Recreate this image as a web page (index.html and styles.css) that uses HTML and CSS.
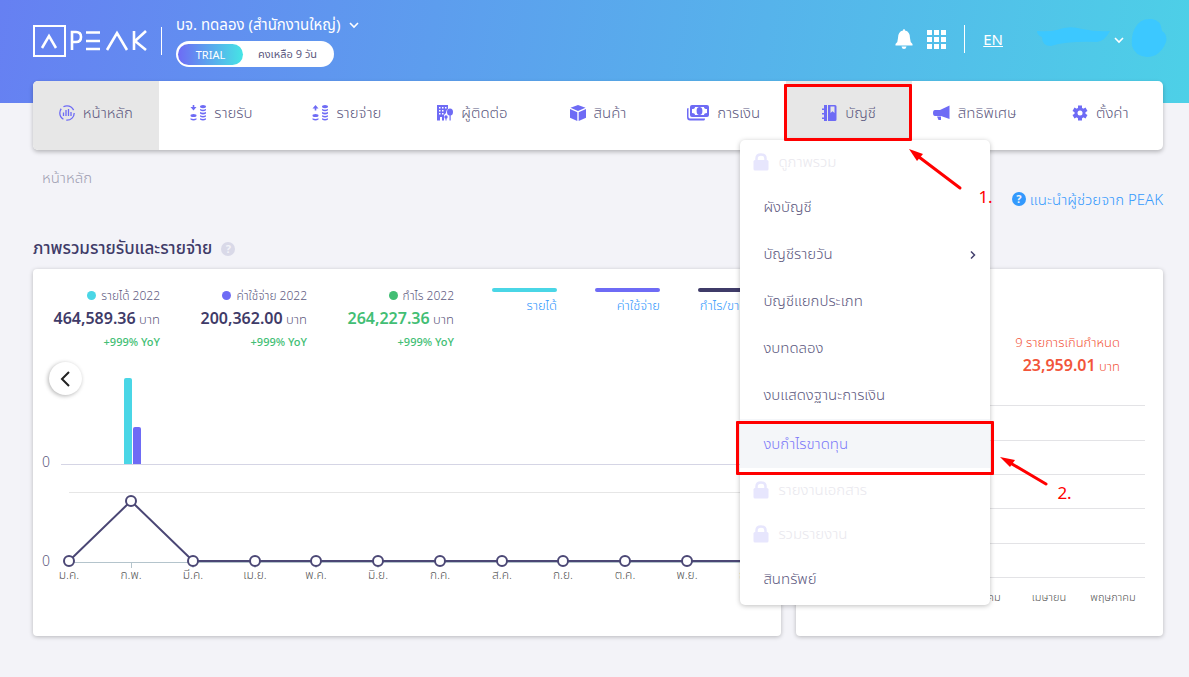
FILE: index.html
```
<!DOCTYPE html>
<html lang="th">
<head>
    <meta charset="UTF-8">
    <meta name="viewport" content="width=device-width, initial-scale=1.0">
    <title>PEAK - หน้าหลัก</title>
    <link rel="stylesheet" href="styles.css">
</head>
<body>

<header class="topbar">
    <svg class="logo" width="116" height="34" viewBox="0 0 116 34" role="img" aria-label="PEAK">
        <g fill="none" stroke="#fff" stroke-width="2">
            <rect x="1" y="2" width="31" height="30"/>
            <path d="M9 24 L16 12 L23 24" stroke-width="2.500"/>
            <path d="M39 26 V8 H43 Q48 8 48 13 Q48 18 43 18 H39 M53 8.500 H67 M53 17 H67 M53 25 H67 M74 26 L84 9 L94 26 M101 7 V26 M113 7 L102 17 L113 26" stroke-width="2.600"/>
        </g>
    </svg>
    <div class="divider"></div>
    <div class="company">
        <button type="button" class="company-name">บจ. ทดลอง (สำนักงานใหญ่)
            <svg width="10" height="7" viewBox="0 0 10 7"><path d="M1 1 L5 5 L9 1" fill="none" stroke="#fff" stroke-width="1.600"/></svg>
        </button>
        <div class="plan"><span class="plan-type">TRIAL</span><span class="plan-left">คงเหลือ 9 วัน</span></div>
    </div>
    <div class="tools">
        <button type="button" aria-label="การแจ้งเตือน">
            <svg width="18" height="20" viewBox="0 0 18 20" fill="#fff"><path d="M9 0 Q10 0 10 1.5 Q15 2.500 15 9 Q15 13 17.500 15 V16.500 H0.500 V15 Q3 13 3 9 Q3 2.500 8 1.500 Q8 0 9 0 Z M6.500 17.500 H11.500 Q11 20 9 20 Q7 20 6.500 17.500 Z"/></svg>
        </button>
        <button type="button" aria-label="แอป">
            <svg width="19" height="19" viewBox="0 0 19 19" fill="#fff"><path d="M0 0h5v5H0z M7 0h5v5H7z M14 0h5v5h-5z M0 7h5v5H0z M7 7h5v5H7z M14 7h5v5h-5z M0 14h5v5H0z M7 14h5v5H7z M14 14h5v5h-5z"/></svg>
        </button>
        <div class="divider"></div>
        <a href="#" class="lang">EN</a>
        <button type="button" class="user" aria-label="บัญชีผู้ใช้">
            <svg width="130" height="42" viewBox="0 0 130 42">
                <path d="M0 13 Q12 14 20 12 Q32 7 45 11 Q60 14 73 13 Q68 23 60 24 Q30 23 14 28 Q5 28 5 19 Q0 17 0 13 Z M98 10 Q103 0 115 1 Q124 2 125 13 Q131 17 129 24 Q123 39 110 39 Q98 38 95 28 Q94 17 98 10 Z" fill="#3cc8ff"/>
                <path d="M78 20 L82 24 L86 20" fill="none" stroke="#fff" stroke-width="1.600"/>
            </svg>
        </button>
    </div>
</header>

<nav class="mainnav">
    <div class="nav-item active"><a href="#">
        <svg width="16" height="16" viewBox="0 0 16 16" fill="none" stroke="#6e6bf5" stroke-width="1.300"><circle cx="8" cy="8" r="7.200" stroke-dasharray="12 3"/><path d="M4.500 7.500V11 M7 5V11 M9.500 4V11 M12 7V11"/></svg>
        หน้าหลัก</a></div>
    <div class="nav-item"><a href="#">
        <svg width="16" height="16" viewBox="0 0 16 16" fill="#6e6bf5"><path d="M2.700 0h1.600v2H6.500L3.500 5.500 0.500 2h2.200z"/><ellipse cx="3.500" cy="10.500" rx="3" ry="1.500"/><path d="M0.500 13.200q3 1.500 6 0v1.300q-3 2-6 0z"/><ellipse cx="13" cy="1.600" rx="3" ry="1.600"/><path d="M10 4q3 1.500 6 0v1.300q-3 2-6 0z M10 7.100q3 1.500 6 0v1.300q-3 2-6 0z M10 10.200q3 1.500 6 0v1.300q-3 2-6 0z M10 13.200q3 1.500 6 0v1.300q-3 2-6 0z"/></svg>
        รายรับ</a></div>
    <div class="nav-item"><a href="#">
        <svg width="16" height="16" viewBox="0 0 16 16" fill="#6e6bf5"><path d="M2.700 5.500h1.600v-2H6.500L3.500 0 0.500 3.500h2.200z"/><ellipse cx="3.500" cy="10.500" rx="3" ry="1.500"/><path d="M0.500 13.200q3 1.500 6 0v1.300q-3 2-6 0z"/><ellipse cx="13" cy="1.600" rx="3" ry="1.600"/><path d="M10 4q3 1.500 6 0v1.300q-3 2-6 0z M10 7.100q3 1.500 6 0v1.300q-3 2-6 0z M10 10.200q3 1.500 6 0v1.300q-3 2-6 0z M10 13.200q3 1.500 6 0v1.300q-3 2-6 0z"/></svg>
        รายจ่าย</a></div>
    <div class="nav-item"><a href="#">
        <svg width="16" height="16" viewBox="0 0 16 16" fill="#6e6bf5"><path d="M0 0h11v4q-2 1-2 4l-2 2v5.500H5V12H3v3.500H0z"/><path d="M2 2h1.500v1.500H2z M5 2h1.500v1.500H5z M8 2h1.500v1.500H8z M2 5h1.500v1.500H2z M5 5h1.500v1.500H5z M2 8h1.500v1.500H2z M5 8h1.500v1.500H5z" fill="#fff"/><ellipse cx="13" cy="7" rx="3" ry="3.500"/><path d="M12.500 9h1.200v6.500h-1.200z M8.500 12h1v3.500h-1z"/><circle cx="9" cy="12" r="1.700"/></svg>
        ผู้ติดต่อ</a></div>
    <div class="nav-item"><a href="#">
        <svg width="16" height="16" viewBox="0 0 16 16" fill="#6e6bf5"><path d="M8 0 L15.500 2.700 L8 6 L0.500 2.700 Z M0 4 L7.300 7.200 V16 L0 12.700 Z M16 4 L8.700 7.200 V16 L16 12.700 Z"/></svg>
        สินค้า</a></div>
    <div class="nav-item"><a href="#">
        <svg width="22" height="16" viewBox="0 0 22 16" fill="#6e6bf5"><path d="M5 0H20Q22 0 22 2V10Q22 12 20 12H5Q3 12 3 10V2Q3 0 5 0Z M0 4Q0 3 1.500 3V12Q1.500 13.500 3.500 13.500H18Q18 15.500 17 15.500H3Q0 15.500 0 12Z"/><path d="M8 2H17Q17 4 20 4V8Q17 8 17 10H8Q8 8 5 8V4Q8 4 8 2Z" fill="#fff"/><ellipse cx="12.500" cy="6" rx="2.900" ry="4"/></svg>
        การเงิน</a></div>
    <div class="nav-item active"><a href="#">
        <svg width="15" height="16" viewBox="0 0 15 16" fill="#6e6bf5"><path d="M2 0h3v16H2v-2H0v-1.500h2V9.500H0V8h2V5H0V3.500h2z M6 0h7q1.500 0 1.500 1.500v13q0 1.500-1.500 1.500H6z"/><path d="M8.500 1.500h4V8l-2-1.700-2 1.700z" fill="#e7e7e7"/></svg>
        บัญชี</a>
        <span class="mark mark-nav"></span>
        <ul class="submenu">
            <li class="locked"><svg width="16" height="18" viewBox="0 0 16 18"><path d="M3.500 8V5.500Q3.500 1.500 8 1.500Q12.500 1.500 12.500 5.500V8" fill="none" stroke="#e7e6fd" stroke-width="2.500"/><rect x="0.500" y="7" width="15" height="10.500" rx="1.500" fill="#e7e6fd"/></svg>ดูภาพรวม</li>
            <li><a href="#">ผังบัญชี</a></li>
            <li><a href="#">บัญชีรายวัน <svg width="6" height="8" viewBox="0 0 6 8"><path d="M1 0.500 L4.500 4 L1 7.500" fill="none" stroke="#44406e" stroke-width="1.500"/></svg></a></li>
            <li><a href="#">บัญชีแยกประเภท</a></li>
            <li><a href="#">งบทดลอง</a></li>
            <li><a href="#">งบแสดงฐานะการเงิน</a></li>
            <li class="selected"><a href="#">งบกำไรขาดทุน</a><span class="mark mark-menu"></span>
                <svg class="arrow arrow-menu" width="50" height="34" viewBox="0 0 50 34"><path d="M12 8 L46 28" stroke="#f00" stroke-width="3" stroke-linecap="round"/><path d="M0 1 L15 4 L10 11 Z" fill="#f00"/></svg>
                <span class="step step-two">2.</span></li>
            <li class="locked"><svg width="16" height="18" viewBox="0 0 16 18"><path d="M3.500 8V5.500Q3.500 1.500 8 1.500Q12.500 1.500 12.500 5.500V8" fill="none" stroke="#e7e6fd" stroke-width="2.500"/><rect x="0.500" y="7" width="15" height="10.500" rx="1.500" fill="#e7e6fd"/></svg>รายงานเอกสาร</li>
            <li class="locked"><svg width="16" height="18" viewBox="0 0 16 18"><path d="M3.500 8V5.500Q3.500 1.500 8 1.500Q12.500 1.500 12.500 5.500V8" fill="none" stroke="#e7e6fd" stroke-width="2.500"/><rect x="0.500" y="7" width="15" height="10.500" rx="1.500" fill="#e7e6fd"/></svg>รวมรายงาน</li>
            <li><a href="#">สินทรัพย์</a></li>
        </ul>
        <svg class="arrow arrow-nav" width="54" height="42" viewBox="0 0 54 42"><path d="M10 8 L51 39" stroke="#f00" stroke-width="3" stroke-linecap="round"/><path d="M0 0 L14 5 L8 12 Z" fill="#f00"/></svg>
        <span class="step step-one">1.</span>
    </div>
    <div class="nav-item"><a href="#">
        <svg width="17" height="16" viewBox="0 0 17 16" fill="#6e6bf5"><path d="M16.500 0.500V14L8 11H2Q0 11 0 8Q0 5 2 5H7Z M4 11.500H8V15H5.500Z"/></svg>
        สิทธิพิเศษ</a></div>
    <div class="nav-item"><a href="#">
        <svg width="16" height="16" viewBox="0 0 16 16"><g stroke="#6e6bf5" stroke-width="4"><path d="M8 0.500V15.500 M1.500 4.250L14.500 11.750 M1.500 11.750L14.500 4.250"/></g><circle cx="8" cy="8" r="5.500" fill="#6e6bf5"/><circle cx="8" cy="8" r="2.500" fill="#fff"/></svg>
        ตั้งค่า</a></div>
</nav>

<main>
    <div class="crumbs">
        <span class="crumb">หน้าหลัก</span>
        <a href="#" class="helper"><span class="help blue">?</span>แนะนำผู้ช่วยจาก PEAK</a>
    </div>
    <h1>ภาพรวมรายรับและรายจ่าย <span class="help">?</span></h1>

    <div class="cards">
        <section class="card overview">
            <div class="summary">
                <div class="stat">
                    <p class="stat-name"><i class="dot cyan"></i>รายได้ 2022</p>
                    <p class="stat-value"><b>464,589.36</b> บาท</p>
                    <p class="yoy">+999% YoY</p>
                </div>
                <div class="stat">
                    <p class="stat-name"><i class="dot violet"></i>ค่าใช้จ่าย 2022</p>
                    <p class="stat-value"><b>200,362.00</b> บาท</p>
                    <p class="yoy">+999% YoY</p>
                </div>
                <div class="stat profit">
                    <p class="stat-name"><i class="dot green"></i>กำไร 2022</p>
                    <p class="stat-value"><b>264,227.36</b> บาท</p>
                    <p class="yoy">+999% YoY</p>
                </div>
                <div class="legends">
                    <a href="#" class="legend"><i class="bar cyan"></i>รายได้</a>
                    <a href="#" class="legend"><i class="bar violet"></i>ค่าใช้จ่าย</a>
                    <a href="#" class="legend"><i class="bar navy"></i>กำไร/ขาดทุน</a>
                </div>
            </div>
            <button type="button" class="prev" aria-label="ก่อนหน้า">
                <svg width="10" height="16" viewBox="0 0 10 16"><path d="M9 1 L2 8 L9 15" fill="none" stroke="#222" stroke-width="2"/></svg>
            </button>
            <!-- viewBox is in card pixels, points are 62 apart -->
            <svg class="chart" viewBox="0 0 748 240">
                <path d="M28 104.500H748" stroke="#d5d5e5"/>
                <path d="M36 132.500H748" stroke="#e6e6e6"/>
                <path d="M36 202.500H748 M98.500 202V208 M160 202V208 M222 202V208 M283 202V208 M345 202V208" stroke="#b4c4cc"/>
                <path d="M91 104V20q0-2 2-2h4q2 0 2 2V104z" fill="#4ad6e6"/>
                <path d="M100 104V69q0-2 2-2h4q2 0 2 2V104z" fill="#6e6bf5"/>
                <g fill="#fff" stroke="#4b4775" stroke-width="2">
                    <path d="M36 201 L98 141 L160 201 H748" fill="none"/>
                    <circle cx="36" cy="201" r="5"/><circle cx="98" cy="141" r="5"/><circle cx="160" cy="201" r="5"/><circle cx="222" cy="201" r="5"/><circle cx="283" cy="201" r="5"/><circle cx="345" cy="201" r="5"/><circle cx="407" cy="201" r="5"/><circle cx="469" cy="201" r="5"/><circle cx="530" cy="201" r="5"/><circle cx="592" cy="201" r="5"/><circle cx="654" cy="201" r="5"/><circle cx="716" cy="201" r="5"/>
                </g>
                <g class="zero"><text x="13" y="107">0</text><text x="13" y="206">0</text></g>
                <g class="months">
                    <text x="36" y="219">ม.ค.</text><text x="98" y="219">ก.พ.</text><text x="160" y="219">มี.ค.</text><text x="222" y="219">เม.ย.</text><text x="283" y="219">พ.ค.</text><text x="345" y="219">มิ.ย.</text><text x="407" y="219">ก.ค.</text><text x="469" y="219">ส.ค.</text><text x="530" y="219">ก.ย.</text><text x="592" y="219">ต.ค.</text><text x="654" y="219">พ.ย.</text><text x="716" y="219">ธ.ค.</text>
                </g>
            </svg>
        </section>

        <section class="card overdue">
            <p class="late">9 รายการเกินกำหนด</p>
            <p class="late-value"><b>23,959.01</b> บาท</p>
            <svg class="chart" viewBox="0 0 367 232">
                <path d="M30 9.500H349 M30 44.500H349 M30 78.500H349 M30 112.500H349 M30 147.500H349 M30 181.500H349" stroke="#e3e3e6"/>
                <g class="months small">
                    <text x="63" y="205">มกราคม</text><text x="126" y="205">กุมภาพันธ์</text><text x="189" y="205">มีนาคม</text><text x="253" y="205">เมษายน</text><text x="317" y="205">พฤษภาคม</text>
                </g>
            </svg>
        </section>
    </div>
</main>

</body>
</html>
```
FILE: styles.css
```
* {
    box-sizing: border-box;
}
body {
    margin: 0;
    font-family: 'Noto Sans', 'Noto Sans Thai', 'Noto Sans Thai UI', sans-serif;
    font-size: 15px;
    font-weight: 300;
    color: #5d5980;
    background: #f3f3f8;
}
a {
    color: inherit;
    text-decoration: none;
}
p, ul {
    margin: 0;
    padding: 0;
}
button {
    padding: 0;
    border: none;
    background: none;
    font: inherit;
    color: inherit;
    cursor: pointer;
}
.topbar {
    display: flex;
    align-items: flex-start;
    height: 103px;
    padding: 15px 22px 0 33px;
    background: linear-gradient(100deg, #6680f2, #4dd0e7);
    color: #fff;
}
.logo {
    margin-top: 9px;
}
.divider {
    width: 1px;
    height: 28px;
    background: #fff;
    margin: 12px 14px 0 12px;
}
.company-name {
    display: flex;
    align-items: center;
    gap: 9px;
    height: 20px;
    font-weight: 400;
}
.plan {
    display: flex;
    align-items: center;
    width: 158px;
    height: 26px;
    margin-top: 6px;
    padding: 2px;
    border-radius: 13px;
    background: #fff;
    font-size: 11px;
    font-weight: 400;
}
.plan-type {
    width: 65px;
    line-height: 21px;
    border-radius: 11px;
    background: linear-gradient(90deg, #6e6bf5, #45e5e5);
    text-align: center;
}
.plan-left {
    flex: 1;
    color: #5d5980;
    text-align: center;
}
.tools {
    display: flex;
    align-items: center;
    margin-left: auto;
    height: 48px;
    gap: 14px;
}
.tools .divider {
    margin: 0 4px;
}
.tools svg {
    display: block;
}
.lang {
    font-size: 15px;
    font-weight: 400;
    text-decoration: underline;
}
.user {
    margin-left: 20px;
}
.mainnav {
    display: flex;
    position: relative;
    height: 69px;
    margin: -22px 26px 0 33px;
    background: #fff;
    border-radius: 5px;
    box-shadow: 0 2px 4px rgba(0, 0, 0, 0.25);
}
.nav-item {
    position: relative;
    flex: 1;
}
.nav-item:first-child {
    border-radius: 5px 0 0 5px;
}
.nav-item.active {
    background: #e7e7e7;
}
.nav-item > a {
    display: flex;
    align-items: center;
    justify-content: center;
    gap: 8px;
    height: 64px;
    white-space: nowrap;
}
.submenu {
    position: absolute;
    z-index: 2;
    top: 59px;
    left: -46px;
    width: 250px;
    padding: 0 0 2px;
    list-style: none;
    background: #fff;
    border-radius: 5px;
    box-shadow: 0 1px 5px rgba(0, 0, 0, 0.25);
}
.submenu li {
    position: relative;
}
.submenu a {
    display: flex;
    align-items: center;
    justify-content: space-between;
    height: 47px;
    padding: 0 14px 0 23px;
}
.submenu .locked {
    display: flex;
    align-items: center;
    gap: 9px;
    height: 44px;
    padding-left: 13px;
    color: #e9e8ee;
}
.submenu .selected {
    padding-top: 2px;
    background: #f4f6f9;
    color: #7b78f8;
}
/* red guide marks */
.mark {
    position: absolute;
    z-index: 3;
    border: 3px solid #f00;
    border-radius: 1px;
}
.mark-nav {
    top: 3px;
    left: -2px;
    right: 0;
    height: 57px;
}
.mark-menu {
    top: 2px;
    left: -4px;
    right: -4px;
    height: 54px;
}
.arrow {
    position: absolute;
    z-index: 3;
}
.arrow-nav {
    top: 68px;
    left: 123px;
}
.arrow-menu {
    top: 37px;
    left: 260px;
}
.step {
    position: absolute;
    z-index: 3;
    font-size: 17px;
    font-weight: 400;
    line-height: 20px;
    color: #f00;
}
.step-one {
    top: 106px;
    left: 192px;
}
.step-two {
    top: 64px;
    left: 317px;
}
main {
    padding: 0 26px 40px 33px;
}
.crumbs {
    display: flex;
    justify-content: space-between;
    height: 79px;
    padding: 16px 0 0 9px;
    line-height: 22px;
}
.crumb {
    color: #a09eb2;
}
.helper {
    display: flex;
    align-items: center;
    gap: 4px;
    height: 22px;
    margin-top: 22px;
    color: #3399fd;
}
.help {
    display: inline-block;
    width: 14px;
    height: 14px;
    border-radius: 50%;
    background: #d9d9e8;
    color: #f3f3f8;
    font-size: 11px;
    font-weight: 700;
    line-height: 14px;
    text-align: center;
}
.help.blue {
    background: #3399fd;
}
h1 {
    display: flex;
    align-items: center;
    gap: 9px;
    height: 40px;
    margin: 0;
    font-size: 17px;
    font-weight: 500;
    color: #3f3b68;
}
.cards {
    display: grid;
    grid-template-columns: 748fr 367fr;
    gap: 15px;
}
.card {
    position: relative;
    min-width: 0;
    background: #fff;
    border-radius: 4px;
    box-shadow: 0 1px 4px rgba(0, 0, 0, 0.25);
}
.overview {
    padding-bottom: 36px;
}
.summary {
    display: flex;
    height: 91px;
    padding-top: 17px;
}
.stat {
    flex: none;
    width: 147px;
    text-align: right;
    white-space: nowrap;
}
.stat:first-child {
    width: 127px;
}
.stat-name {
    font-size: 12px;
    line-height: 20px;
}
.dot {
    display: inline-block;
    width: 9px;
    height: 9px;
    margin-right: 5px;
    border-radius: 50%;
}
.cyan {
    background: #4ad6e6;
}
.violet {
    background: #6e6bf5;
}
.green {
    background: #42be74;
}
.navy {
    background: #3f3b68;
}
.stat-value {
    font-size: 13px;
    line-height: 24px;
}
.stat-value b, .late-value b {
    font-size: 16px;
    font-weight: 600;
    color: #3f3b68;
}
.profit b, .stat .yoy {
    color: #42be74;
}
.yoy {
    font-size: 11px;
    font-weight: 500;
    line-height: 22px;
}
.legends {
    display: flex;
    gap: 38px;
    margin: 2px 0 0 38px;
}
.legend {
    width: 65px;
    font-size: 13px;
    line-height: 26px;
    text-align: right;
    white-space: nowrap;
    color: #3399fd;
}
.bar {
    display: block;
    height: 4px;
    border-radius: 2px;
}
.chart {
    display: block;
    width: 100%;
}
.prev {
    position: absolute;
    top: 93px;
    left: 16px;
    width: 33px;
    height: 33px;
    border-radius: 50%;
    background: #fff;
    box-shadow: -1px 1px 4px rgba(0, 0, 0, 0.3);
}
.prev svg {
    display: block;
    margin: 0 auto 0 11px;
}
.zero {
    font-size: 14px;
    fill: #5d5980;
    text-anchor: middle;
}
.months {
    font-size: 12px;
    fill: #555;
    text-anchor: middle;
}
.months.small {
    font-size: 11px;
}
.overdue {
    padding-top: 62px;
}
.overdue .chart {
    margin-top: 18px;
}
.late, .late-value {
    padding-right: 43px;
    font-size: 13px;
    line-height: 23px;
    text-align: right;
    color: #f2553a;
}
.late-value b {
    color: #f2553a;
}
.profit .stat-value b {
    color: #42be74;
}
```
